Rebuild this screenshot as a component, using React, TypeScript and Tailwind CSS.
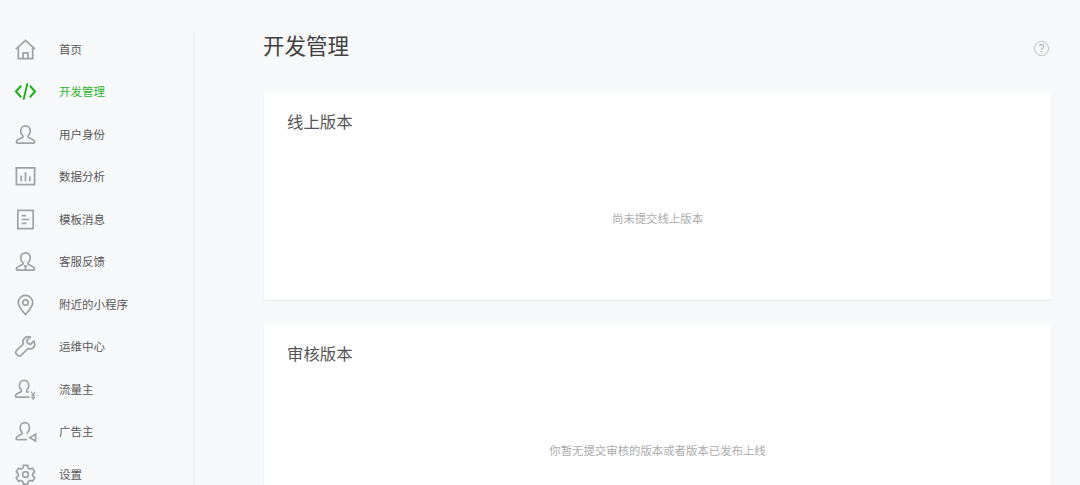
import React from "react";

const icons: Record<string, React.ReactNode> = {
  home: (
    <>
      <path d="M2 11.500 12 2.500l10 9" />
      <path d="M4.500 10v11.500h15V10" />
      <path d="M9.500 21.500v-6h5v6" />
    </>
  ),
  code: (
    <>
      <path d="M7.500 6 2 12l5.500 6" strokeWidth={2} />
      <path d="M16.500 6 22 12l-5.500 6" strokeWidth={2} />
      <path d="M14 3.500 10 20.500" strokeWidth={2} />
    </>
  ),
  user: (
    <path d="M12 3c3 0 5 2.300 5 5.300 0 2.200-1 3.700-2.200 5-.6.700-.3 1.500.5 1.900l4.500 2.200c1.300.6 1.700 1.500 1.700 2.600 0 .6-.4 1-1 1H3.500c-.6 0-1-.4-1-1 0-1.100.4-2 1.700-2.600l4.500-2.200c.8-.4 1.100-1.200.5-1.900C7.500 12 7 10.500 7 8.300 7 5.300 9 3 12 3Z" />
  ),
  chart: (
    <>
      <path d="M1.500 3h21" />
      <path d="M2.500 3v17.500h19V3" />
      <path d="M7.500 11v6M12 7.500v9.500M16.500 12v5" />
    </>
  ),
  doc: (
    <>
      <rect x="4" y="2.500" width="16" height="19" />
      <path d="M8 8h4.500M8 12h8M8 16h5" />
    </>
  ),
  service: (
    <>
      <path d="M12 3c3 0 5 2.300 5 5.300 0 2.200-1 3.700-2.200 5-.6.700-.3 1.500.5 1.900l4.500 2.200c1.300.6 1.700 1.500 1.700 2.600 0 .6-.4 1-1 1H3.500c-.6 0-1-.4-1-1 0-1.100.4-2 1.700-2.600l4.500-2.200c.8-.4 1.100-1.200.5-1.900C7.500 12 7 10.500 7 8.300 7 5.300 9 3 12 3Z" />
      <path d="M10.500 16 12 17.500l1.500-1.500M12 17.500V21" />
    </>
  ),
  pin: (
    <>
      <path d="M12 22.500C8 18 4.500 14.500 4.500 10a7.500 7.500 0 0 1 15 0c0 4.500-3.500 8-7.500 12.500Z" />
      <circle cx="12" cy="10" r="2.800" />
    </>
  ),
  wrench: (
    <path d="M20.800 6.200 17.200 9.800l-3-1-1-3 3.600-3.600c-2.500-.8-5 0-6.300 1.600-1.300 1.600-1.500 3.700-.7 5.400L2.600 16.400c-1 1-1 2.500 0 3.500l1.300 1.300c1 1 2.500 1 3.500 0l7.200-7.200c1.700.8 3.800.6 5.400-.7 1.600-1.300 1.900-4.300.8-7.100Z" />
  ),
  yen: (
    <>
      <path d="M16 20H2.500c-.6 0-1-.4-1-1 0-1.100.4-1.900 1.600-2.500l4-2c.8-.4 1.100-1.200.5-1.900C6.400 11.300 5.600 9.800 5.600 7.800c0-3 2-5.300 4.900-5.300s4.900 2.300 4.900 5.300c0 2-.8 3.500-2 4.800-.6.700-.3 1.500.5 1.900l1.500.7" />
      <path d="M18 14.500l2 3 2-3M20 17.500V23M18 18.500h4M18 20.500h4" strokeWidth={1.300} />
    </>
  ),
  ad: (
    <>
      <path d="M13.500 20.500H3.300c-.6 0-1-.4-1-1 0-1.100.4-2 1.600-2.600l4-2c.8-.4 1.100-1.200.5-1.900C7.200 11.700 6.400 10.100 6.400 8c0-3 2-5.300 4.900-5.300s4.900 2.300 4.900 5.300c0 2-.8 3.600-2 4.900-.4.500-.4 1-.1 1.500" />
      <path d="M22.500 14.800v7.200l-6-3.600 6-3.600Z" />
    </>
  ),
  gear: (
    <>
      <path d="M9.800 2.500h4.400l.6 2.800 1.900 1.100 2.700-.9 2.200 3.800-2.100 1.900v2.200l2.100 1.900-2.200 3.800-2.700-.9-1.900 1.100-.6 2.800H9.800l-.6-2.800-1.900-1.100-2.700.9-2.200-3.800 2.100-1.900v-2.200L2.400 9.300l2.200-3.800 2.700.9 1.900-1.100.6-2.800Z" />
      <circle cx="12" cy="12" r="3" />
    </>
  ),
};

const menu = [
  { icon: "home", label: "首页" },
  { icon: "code", label: "开发管理", active: true },
  { icon: "user", label: "用户身份" },
  { icon: "chart", label: "数据分析" },
  { icon: "doc", label: "模板消息" },
  { icon: "service", label: "客服反馈" },
  { icon: "pin", label: "附近的小程序" },
  { icon: "wrench", label: "运维中心" },
  { icon: "yen", label: "流量主" },
  { icon: "ad", label: "广告主" },
  { icon: "gear", label: "设置" },
];

function VersionCard({ title, empty, className }: { title: string; empty: string; className: string }) {
  return (
    <section className={`bg-white rounded-[2px] shadow-[0_1px_2px_rgba(0,0,0,0.07)] pl-[24px] pr-[24px] shrink-0 ${className}`}>
      <h2 className="text-[16.4px] leading-[22px] pt-[18px] -ml-[1px] text-[#555555] font-normal">{title}</h2>
      <p className="mt-[78px] text-center text-[11.4px] leading-[16px] text-[#ababab]">{empty}</p>
    </section>
  );
}

export default function App() {
  return (
    <div
      className="h-[485px] w-[1080px] overflow-hidden bg-[#f8f9fb] flex"
      style={{ fontFamily: '"Liberation Sans", "Noto Sans CJK SC", sans-serif' }}
    >
      <aside className="w-[195px] h-[453px] mt-[32px] shrink-0 border-r-2 border-[#f1f2f4]">
        <nav className="-mt-[4px]">
          {menu.map((item) => (
            <div
              key={item.label}
              className={`h-[42.5px] flex items-center pl-[14px] ${item.active ? "text-[#1aad19]" : "text-[#a2a2a2]"}`}
            >
              <svg
                viewBox="0 0 24 24"
                fill="none"
                stroke="currentColor"
                strokeWidth={1.800}
                className="w-[23px] h-[23px] shrink-0"
              >
                {icons[item.icon]}
              </svg>
              <span
                className={`ml-[22px] pt-[2px] text-[11.5px] ${item.active ? "text-[#2fb52e]" : "text-[#585858]"}`}
              >
                {item.label}
              </span>
            </div>
          ))}
        </nav>
      </aside>
      <main className="flex-1 min-w-0 pl-[69px] pr-[29px] flex flex-col">
        <header className="h-[93px] shrink-0 flex justify-between pt-[32px]">
          <h1 className="text-[21.5px] leading-[30px] -ml-[1px] font-normal text-[#404040]">开发管理</h1>
          <div className="w-[15px] h-[15px] mt-[8.5px] mr-[2px] rounded-full border-[1.5px] border-[#bbbbbb] text-[#a8a8a8] text-[11px] leading-[12px] text-center">
            ?
          </div>
        </header>
        <VersionCard title="线上版本" empty="尚未提交线上版本" className="h-[207px]" />
        <VersionCard title="审核版本" empty="你暂无提交审核的版本或者版本已发布上线" className="h-[207px] mt-[25px]" />
      </main>
    </div>
  );
}
